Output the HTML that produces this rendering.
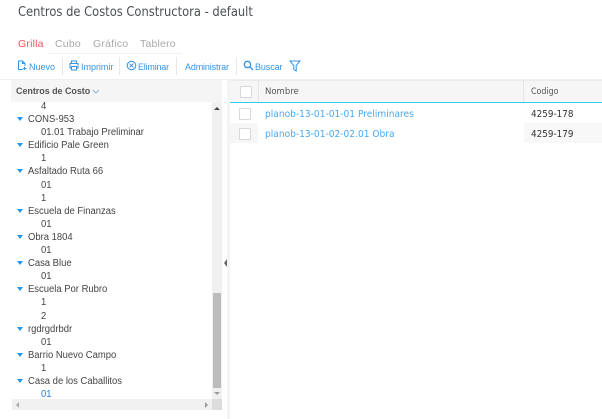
<!DOCTYPE html>
<html><head><meta charset="utf-8">
<style>
html,body{margin:0;padding:0;background:#fff}
#p{position:relative;width:602px;height:419px;overflow:hidden;background:#fff;font-family:"Liberation Sans",sans-serif}
.a{position:absolute;white-space:nowrap}
.m{font-family:"DejaVu Sans",sans-serif;transform-origin:0 50%}
.t{color:#444;font-size:10px;line-height:13px;position:absolute;white-space:nowrap;margin-top:1px;transform:scaleX(.945);transform-origin:0 50%}
.tb{color:#3594e4;font-size:9px;line-height:12px;top:61px;position:absolute;white-space:nowrap}
.sep{position:absolute;top:57px;height:18px;width:1px;background:#e8e8e8}
.tri{position:absolute;left:17px;width:0;height:0;border-left:3px solid transparent;border-right:3px solid transparent;border-top:4px solid #2196f3;margin-top:0}
.cb{position:absolute;width:10px;height:10px;border:1px solid #d8d8d8;background:#fff;border-radius:1px}
.l{font-size:9.8px;line-height:13px;color:#48a8f0;transform:scaleX(.925)}
.c{font-size:9.8px;line-height:13px;color:#333;transform:scaleX(.9)}
</style></head><body>
<div id="p">
<div class="a m" style="left:18px;top:4px;font-size:13px;line-height:17px;color:#4a4f55;transform:scaleX(.885)">Centros de Costos Constructora - default</div>

<div class="a" style="left:48px;top:53px;width:134px;height:1px;background:#f2f2f2"></div>
<div class="a" style="left:18px;top:38px;font-size:10.5px;line-height:13px;color:#f5535f;letter-spacing:.2px">Grilla</div>
<div class="a" style="left:55px;top:38px;font-size:10.5px;line-height:13px;color:#a8a8a8;letter-spacing:.2px">Cubo</div>
<div class="a" style="left:93px;top:38px;font-size:10.5px;line-height:13px;color:#a8a8a8;letter-spacing:.2px">Gráfico</div>
<div class="a" style="left:140px;top:38px;font-size:10.5px;line-height:13px;color:#a8a8a8;letter-spacing:.2px">Tablero</div>

<svg class="a" style="left:17px;top:60px" width="11" height="11" viewBox="0 0 11 11" fill="none" stroke="#3594e4" stroke-width="1"><path d="M6 9.5H1.5V1H5.5L8 3.5V6M5.5 1V3.5H8M7.5 7V10M6 8.5H9.5"/></svg>
<div class="tb" style="left:29px">Nuevo</div>
<div class="sep" style="left:62px"></div>
<svg class="a" style="left:69px;top:60px" width="10" height="11" viewBox="0 0 10 11" fill="none" stroke="#3594e4" stroke-width="1"><path d="M2.5 3.5V1H7.5V3.5M2.5 8H1V3.5H9V8H7.5M2.5 6.5H7.5V10H2.5Z"/></svg>
<div class="tb" style="left:81px;letter-spacing:-.02px">Imprimir</div>
<div class="sep" style="left:119px"></div>
<svg class="a" style="left:126px;top:60px" width="11" height="11" viewBox="0 0 11 11" fill="none" stroke="#3594e4" stroke-width="1"><circle cx="5.5" cy="5.5" r="4.3"/><path d="M3.7 3.7L7.3 7.3M7.3 3.7L3.7 7.3"/></svg>
<div class="tb" style="left:138px;letter-spacing:-.2px">Eliminar</div>
<div class="sep" style="left:176px"></div>
<div class="tb" style="left:185px;letter-spacing:-.15px">Administrar</div>
<div class="sep" style="left:236px"></div>
<svg class="a" style="left:243px;top:60px" width="11" height="11" viewBox="0 0 11 11" fill="none" stroke="#3594e4" stroke-width="1.3"><circle cx="4.5" cy="4.5" r="3.2"/><path d="M7 7L10 10"/></svg>
<div class="tb" style="left:255px;letter-spacing:-.1px">Buscar</div>
<svg class="a" style="left:289px;top:60px" width="12" height="12" viewBox="0 0 12 12" fill="none" stroke="#3594e4" stroke-width="1"><path d="M1 1H11L7.2 5.5V11L4.8 9.5V5.5Z"/></svg>

<div class="a" style="left:0;top:79px;width:602px;height:1px;background:#efefef"></div>

<div class="a" style="left:11px;top:80px;width:211px;height:22px;background:#f5f5f5"></div>
<div class="a" style="left:16px;top:85px;font-size:9px;line-height:12px;font-weight:bold;color:#555;letter-spacing:-.05px">Centros de Costo</div>
<svg class="a" style="left:92px;top:89px" width="8" height="6" viewBox="0 0 8 6" fill="none" stroke="#8fb4d6" stroke-width="1"><path d="M1 1L4 4L7 1"/></svg>

<div class="t" style="left:41px;top:99px">4</div>
<div class="tri" style="top:117px"></div><div class="t" style="left:28px;top:112px">CONS-953</div>
<div class="t" style="left:41px;top:125px">01.01 Trabajo Preliminar</div>
<div class="tri" style="top:143px"></div><div class="t" style="left:28px;top:138px">Edificio Pale Green</div>
<div class="t" style="left:41px;top:151px">1</div>
<div class="tri" style="top:169px"></div><div class="t" style="left:28px;top:164px">Asfaltado Ruta 66</div>
<div class="t" style="left:41px;top:178px">01</div>
<div class="t" style="left:41px;top:191px">1</div>
<div class="tri" style="top:209px"></div><div class="t" style="left:28px;top:204px">Escuela de Finanzas</div>
<div class="t" style="left:41px;top:217px">01</div>
<div class="tri" style="top:235px"></div><div class="t" style="left:28px;top:230px">Obra 1804</div>
<div class="t" style="left:41px;top:243px">01</div>
<div class="tri" style="top:261px"></div><div class="t" style="left:28px;top:256px">Casa Blue</div>
<div class="t" style="left:41px;top:269px">01</div>
<div class="tri" style="top:287px"></div><div class="t" style="left:28px;top:282px">Escuela Por Rubro</div>
<div class="t" style="left:41px;top:295px">1</div>
<div class="t" style="left:41px;top:309px">2</div>
<div class="tri" style="top:327px"></div><div class="t" style="left:28px;top:322px">rgdrgdrbdr</div>
<div class="t" style="left:41px;top:335px">01</div>
<div class="tri" style="top:353px"></div><div class="t" style="left:28px;top:348px">Barrio Nuevo Campo</div>
<div class="t" style="left:41px;top:361px">1</div>
<div class="tri" style="top:379px"></div><div class="t" style="left:28px;top:374px">Casa de los Caballitos</div>
<div class="t" style="left:41px;top:387px;color:#2f7fd0">01</div>

<div class="a" style="left:212px;top:102px;width:10px;height:297px;background:#f0f0f0"></div>
<div class="a" style="left:213px;top:293px;width:8px;height:95px;background:#bcbcbc"></div>
<div class="a" style="left:214px;top:107px;width:0;height:0;border-left:3px solid transparent;border-right:3px solid transparent;border-bottom:3px solid #444"></div>
<div class="a" style="left:214px;top:392px;width:0;height:0;border-left:3px solid transparent;border-right:3px solid transparent;border-top:3px solid #999"></div>
<div class="a" style="left:12px;top:399px;width:200px;height:11px;background:#f0f0f0"></div>
<div class="a" style="left:212px;top:399px;width:10px;height:11px;background:#dcdcdc"></div>
<div class="a" style="left:16px;top:402px;width:0;height:0;border-top:3px solid transparent;border-bottom:3px solid transparent;border-right:3px solid #aaa"></div>
<div class="a" style="left:205px;top:402px;width:0;height:0;border-top:3px solid transparent;border-bottom:3px solid transparent;border-left:3px solid #999"></div>

<div class="a" style="left:224px;top:259px;width:0;height:0;border-top:4px solid transparent;border-bottom:4px solid transparent;border-right:3px solid #666"></div>
<div class="a" style="left:227px;top:80px;width:3px;height:339px;background:#f4f4f4"></div>

<div class="a" style="left:230px;top:81px;width:372px;height:21px;background:#f6f6f6"></div>
<div class="a" style="left:230px;top:80px;width:372px;height:1px;background:#ececec"></div>
<div class="a" style="left:258px;top:81px;width:1px;height:21px;background:#e6e6e6"></div>
<div class="a" style="left:523px;top:81px;width:1px;height:21px;background:#e6e6e6"></div>
<div class="a" style="left:230px;top:102px;width:372px;height:1px;background:#2fcdf2"></div>
<div class="cb" style="left:240px;top:86px"></div>
<div class="a m" style="left:265px;top:86px;font-size:8.5px;line-height:12px;color:#555">Nombre</div>
<div class="a m" style="left:531px;top:86px;font-size:8.5px;line-height:12px;color:#555;transform:scaleX(.93)">Codigo</div>

<div class="cb" style="left:239px;top:108px"></div>
<div class="a m l" style="left:265px;top:108px">planob-13-01-01-01 Preliminares</div>
<div class="a m c" style="left:531px;top:108px">4259-178</div>

<div class="a" style="left:230px;top:123px;width:28px;height:20px;background:#f6f6f6"></div>
<div class="a" style="left:524px;top:123px;width:78px;height:20px;background:#f8f8f8"></div>
<div class="cb" style="left:239px;top:128px"></div>
<div class="a m l" style="left:265px;top:128px">planob-13-01-02-02.01 Obra</div>
<div class="a m c" style="left:531px;top:128px">4259-179</div>
</div>
</body></html>
